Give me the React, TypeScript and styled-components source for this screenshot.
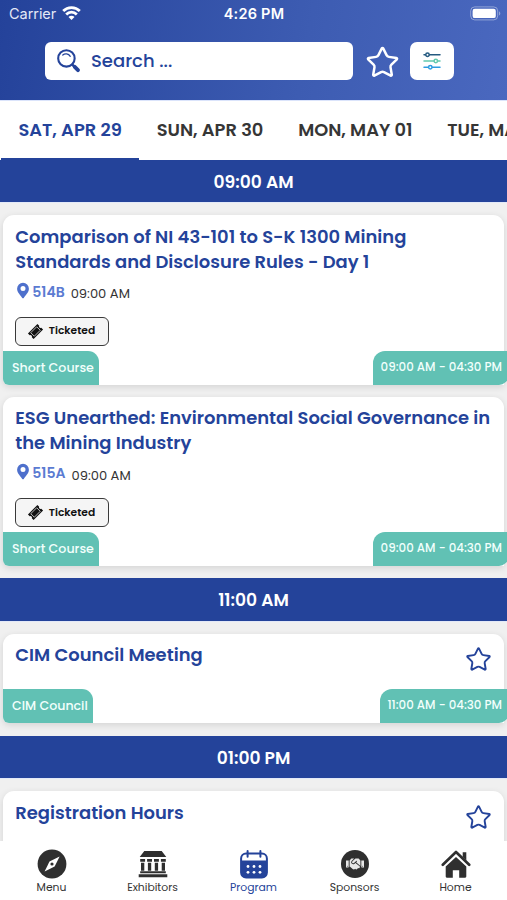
import React from 'react';
import styled, { createGlobalStyle } from 'styled-components';
import { Star } from 'lucide-react';
import { FaHandshake } from 'react-icons/fa';

const GlobalStyle = createGlobalStyle`
  *, *::before, *::after { box-sizing: border-box; }
  body {
    margin: 0;
    background: #f0f0f0;
    font-family: Poppins, Inter, 'Open Sans', sans-serif;
    color: #333333;
  }
`;

const blue = '#24439a';
const teal = '#61c1b4';
const dark = '#2f2f2f';

const Screen = styled.div`
  width: 507px;
  height: 900px;
  overflow: hidden;
  display: flex;
  flex-direction: column;
  background: #f0f0f0;
`;

const Header = styled.header`
  flex: none;
  height: 100px;
  background: linear-gradient(100deg, #24429a 0%, #3d5cb2 60%, #4a68bf 100%);
`;

const StatusBar = styled.div`
  height: 27px;
  padding: 0 8px 0 9px;
  display: grid;
  grid-template-columns: 1fr auto 1fr;
  align-items: center;
  color: #ffffff;
  font-family: Inter, sans-serif;
`;

const Carrier = styled.div`
  display: flex;
  align-items: center;
  gap: 6px;
  font-size: 14.5px;
  letter-spacing: -0.05px;
  color: #e4e9f6;
`;

const Clock = styled.div`
  font-size: 14.5px;
  font-weight: 600;
  letter-spacing: 0.25px;
`;

const BatterySlot = styled.div`
  display: flex;
  justify-content: flex-end;
  margin-right: -2px;
`;

const SearchRow = styled.div`
  display: flex;
  align-items: center;
  padding: 15px 0 0 45px;
`;

const SearchField = styled.div`
  width: 307.5px;
  height: 38px;
  display: flex;
  align-items: center;
  padding: 0 0 1px 11px;
  gap: 10px;
  border-radius: 6px;
  background: #ffffff;
  color: ${blue};
  font-size: 18px;
  font-weight: 500;
  line-height: 26px;
`;

const FavouriteButton = styled.div`
  width: 57.5px;
  padding: 2px 0 0 2px;
  display: flex;
  justify-content: center;
  color: #ffffff;
`;

const FilterButton = styled.div`
  width: 44px;
  height: 38px;
  display: flex;
  align-items: center;
  justify-content: center;
  border-radius: 7px;
  background: #ffffff;
`;

const Tabs = styled.nav`
  flex: none;
  height: 59.5px;
  padding-left: 1px;
  display: flex;
  overflow: hidden;
  background: #ffffff;
  border-top: 1px solid #dbe4fb;
`;

const Tab = styled.div<{ $active?: boolean }>`
  flex: none;
  padding: 0 17.4px;
  line-height: 57px;
  font-size: 17.85px;
  font-weight: 600;
  white-space: nowrap;
  color: ${(p) => (p.$active ? blue : '#363636')};
  border-bottom: 2.5px solid ${(p) => (p.$active ? blue : 'transparent')};
`;

const Program = styled.main`
  flex: 1;
  min-height: 0;
  overflow: hidden;
`;

const TimeBar = styled.h2`
  margin: 0;
  height: 43.6px;
  line-height: 44px;
  text-align: center;
  font-size: 17.1px;
  font-weight: 600;
  color: #ffffff;
  background: ${blue};
  border-bottom: 1px solid #e3e9f8;
`;

const Group = styled.section`
  padding: 12px 3px 12.3px 3px;
  display: flex;
  flex-direction: column;
  gap: 12px;
`;

const Card = styled.article<{ $tall?: boolean }>`
  height: ${(p) => (p.$tall ? 169.5 : 89.5)}px;
  display: flex;
  flex-direction: column;
  justify-content: space-between;
  background: #ffffff;
  border-radius: 11px 11px 0 6px;
  box-shadow: 0 2px 7px rgba(0, 0, 0, 0.12);
`;

const CardTop = styled.div`
  display: flex;
  justify-content: space-between;
  padding: 8.5px 12px 0 12.3px;
`;

const Title = styled.h3`
  margin: 0;
  font-size: 17.95px;
  font-weight: 600;
  line-height: 25px;
  color: ${blue};
`;

const TitleLine = styled.span`
  display: block;
  white-space: nowrap;
`;

const CardStar = styled.div`
  padding-top: 4px;
  color: ${blue};
`;

const Meta = styled.div`
  display: flex;
  align-items: center;
  height: 20px;
  margin-top: 8px;
`;

const Room = styled.span`
  margin: 0 6px 0 0;
  font-size: 14px;
  font-weight: 600;
  line-height: 20px;
  color: #5b7bd2;
`;

const StartTime = styled.span`
  padding-top: 5px;
  font-size: 13.1px;
  line-height: 20px;
  color: #333333;
`;

const Ticket = styled.div`
  width: 94px;
  height: 29px;
  margin: 15px 0 0 -0.5px;
  padding-left: 11px;
  display: flex;
  align-items: center;
  gap: 5px;
  border: 1.5px solid #3a3a3a;
  border-radius: 6px;
  background: #f5f5f5;
  color: #111111;
  font-size: 10.7px;
  font-weight: 600;
`;

const CardFooter = styled.footer`
  display: flex;
  justify-content: space-between;
  margin-right: -4px;
  color: #f2fffc;
  font-weight: 500;
`;

const TypeTag = styled.span`
  height: 34px;
  padding: 0 5.5px 0 9px;
  line-height: 34px;
  border-radius: 0 11px 0 6px;
  background: ${teal};
  font-size: 12.6px;
`;

const RangeTag = styled.span`
  height: 34px;
  padding: 0 6px 0 7.5px;
  line-height: 33.5px;
  border-radius: 12px 0 9px 0;
  background: ${teal};
  font-size: 11.85px;
  white-space: nowrap;
`;

const BottomNav = styled.nav`
  flex: none;
  height: 59px;
  display: grid;
  grid-template-columns: repeat(5, 101px);
  justify-content: center;
  background: #ffffff;
`;

const NavItem = styled.div<{ $active?: boolean }>`
  display: flex;
  flex-direction: column;
  align-items: center;
  padding-top: 8px;
  gap: 1px;
  font-size: 10.8px;
  line-height: 15px;
  color: ${(p) => (p.$active ? blue : '#333333')};

  svg { display: block; }
`;

const SponsorBadge = styled.span`
  width: 28px;
  height: 28px;
  margin: 1px 0;
  display: flex;
  align-items: center;
  justify-content: center;
  border-radius: 50%;
  background: ${dark};
  color: #e8e8e8;
`;

const WifiIcon = () => (
  <svg width="19" height="15" viewBox="0 0 19 15" fill="none" stroke="#fff" strokeWidth="2.8">
    <path d="M1.2 5.1a11.7 11.7 0 0 1 16.6 0" />
    <path d="M4.2 8.4a7.5 7.5 0 0 1 10.6 0" />
    <path d="M9.5 14 6.5 11a4.2 4.2 0 0 1 6 0z" fill="#fff" stroke="none" />
  </svg>
);

const BatteryIcon = () => (
  <svg width="31" height="15" viewBox="0 0 31 15">
    <rect x="0.7" y="0.9" width="27" height="13" rx="4" fill="none" stroke="#fff" strokeOpacity="0.4" />
    <rect x="2.6" y="2.7" width="23.2" height="9.4" rx="2.2" fill="#fff" />
    <path d="M29 5.2c1.8.8 1.8 3.6 0 4.4z" fill="#fff" fillOpacity="0.4" />
  </svg>
);

const SearchIcon = () => (
  <svg width="25" height="25" viewBox="0 0 24 24" fill="none" stroke={blue} strokeLinecap="round">
    <circle cx="10" cy="10" r="7.9" strokeWidth="2" />
    <path d="m15.7 16 1.8 1.8" strokeWidth="2.4" />
    <path d="m18 18.1 3.1 3.1" strokeWidth="3.7" />
    <path d="M6.5 6.800c2-1.800 5.500-1.500 7.200 1.200" strokeWidth="1.200" />
  </svg>
);

const FilterIcon = () => (
  <svg width="20" height="20" viewBox="0 0 20 20" strokeWidth="1.5" strokeLinecap="round">
    <g stroke="#255a80" fill="#fff"><path d="M2 3.7h16" /><circle cx="5.500" cy="3.700" r="1.700" /></g>
    <g stroke="#62c9ad" fill="#fff"><path d="M2 10h16" /><circle cx="13.800" cy="10" r="1.700" /></g>
    <g stroke="#2d9ce0" fill="#fff"><path d="M2 16.300h16" /><circle cx="8.300" cy="16.300" r="1.700" /></g>
  </svg>
);

const PinIcon = () => (
  <svg width="17" height="20" viewBox="0 0 17 20">
    <path
      fill="#4e70cc"
      fillRule="evenodd"
      d="M8 .8a5.900 5.900 0 0 0-5.900 5.900c0 3.900 3.800 6.600 5.100 9.200q.8.900 1.600 0c1.300-2.600 5.100-5.300 5.100-9.200A5.900 5.900 0 0 0 8 .8Zm0 3.200a2.500 2.500 0 1 1 0 5 2.500 2.500 0 0 1 0-5Z"
    />
  </svg>
);

const TicketIcon = () => (
  <svg width="17" height="17" viewBox="0 0 17 17">
    <g transform="rotate(-45 8.5 8.5)">
      <path d="M1.800 4.500h13.400v2.500a1.600 1.600 0 0 0 0 3v2.500H1.800V10a1.600 1.600 0 0 0 0-3z" fill="#111" />
      <rect x="4.300" y="6" width="8.400" height="5" fill="none" stroke="#f5f5f5" strokeWidth="0.700" />
    </g>
  </svg>
);

const CompassIcon = () => (
  <svg width="30" height="30" viewBox="0 0 30 30">
    <circle cx="15" cy="15" r="14.400" fill={dark} />
    <path d="M22.600 7.500 17.600 17.400 7.600 22.500 12.500 12.500z" fill="#fff" />
    <circle cx="15" cy="15" r="1.600" fill={dark} />
  </svg>
);

const HallIcon = () => (
  <svg width="30" height="30" viewBox="0 0 30 30" fill={dark}>
    <path d="M6.300 2h17.400l4.600 6H1.700zM.7 25.200h28.600v3H.7zM2.200 22.300h25.600v1.900H2.200z" />
    <path d="M2.200 10h4.900v2.800H2.200zM9.100 10h4.900v2.800H9.100zM16 10h4.900v2.800H16zM22.900 10h4.900v2.800h-4.900z" />
    <path d="M3 13.800h3.300v8H3zM9.900 13.800h3.300v8H9.900zM16.800 13.800h3.300v8h-3.300zM23.700 13.800H27v8h-3.300z" />
  </svg>
);

const CalendarIcon = () => (
  <svg width="30" height="30" viewBox="0 0 30 30">
    <rect x="2.100" y="4.600" width="25.800" height="24" rx="5" fill="#fff" stroke={blue} strokeWidth="2" />
    <path d="M2 11.400h26v12.500a5 5 0 0 1-5 5H7a5 5 0 0 1-5-5z" fill={blue} />
    <path d="M8.600 2v5.800M21.400 2v5.800" stroke={blue} strokeWidth="2" strokeLinecap="round" />
    <g fill="#fff">
      <circle cx="9" cy="17.500" r="1.400" /><circle cx="15" cy="17.500" r="1.400" /><circle cx="21" cy="17.500" r="1.400" />
      <circle cx="9" cy="23.300" r="1.400" /><circle cx="15" cy="23.300" r="1.400" /><circle cx="21" cy="23.300" r="1.400" />
    </g>
  </svg>
);

const HomeIcon = () => (
  <svg width="30" height="30" viewBox="0 0 30 30">
    <path d="m1.800 15.700 13.200-12.700 13.200 12.700" fill="none" stroke={dark} strokeWidth="2.700" strokeLinecap="round" strokeLinejoin="round" />
    <path d="M21.700 3.200h3.600v8.200l-3.600-3.500z" fill={dark} />
    <path d="M15 8 25.300 17.500v10.100q0 1.100-1.100 1.100h-6v-7.500h-6.400v7.500H5.800q-1.100 0-1.100-1.100V17.500z" fill={dark} />
  </svg>
);

type Session = {
  title: string[];
  room?: string;
  start?: string;
  type?: string;
  range?: string;
};

const groups: { time: string; sessions: Session[] }[] = [
  {
    time: '09:00 AM',
    sessions: [
      {
        title: ['Comparison of NI 43-101 to S-K 1300 Mining', 'Standards and Disclosure Rules - Day 1'],
        room: '514B',
        start: '09:00 AM',
        type: 'Short Course',
        range: '09:00 AM - 04:30 PM',
      },
      {
        title: ['ESG Unearthed: Environmental Social Governance in', 'the Mining Industry'],
        room: '515A',
        start: '09:00 AM',
        type: 'Short Course',
        range: '09:00 AM - 04:30 PM',
      },
    ],
  },
  {
    time: '11:00 AM',
    sessions: [
      { title: ['CIM Council Meeting'], type: 'CIM Council', range: '11:00 AM - 04:30 PM' },
    ],
  },
  {
    time: '01:00 PM',
    sessions: [{ title: ['Registration Hours'] }],
  },
];

const SessionCard = ({ session }: { session: Session }) => (
  <Card $tall={!!session.room}>
    <CardTop>
      <div>
        <Title>
          {session.title.map((line) => (
            <TitleLine key={line}>{line}</TitleLine>
          ))}
        </Title>
        {session.room && (
          <>
            <Meta>
              <PinIcon />
              <Room>{session.room}</Room>
              <StartTime>{session.start}</StartTime>
            </Meta>
            <Ticket><TicketIcon />Ticketed</Ticket>
          </>
        )}
      </div>
      {!session.room && <CardStar><Star size={27} strokeWidth={1.7} /></CardStar>}
    </CardTop>
    {session.type && (
      <CardFooter>
        <TypeTag>{session.type}</TypeTag>
        <RangeTag>{session.range}</RangeTag>
      </CardFooter>
    )}
  </Card>
);

export default function App() {
  return (
    <Screen>
      <GlobalStyle />
      <Header>
        <StatusBar>
          <Carrier>Carrier<WifiIcon /></Carrier>
          <Clock>4:26 PM</Clock>
          <BatterySlot><BatteryIcon /></BatterySlot>
        </StatusBar>
        <SearchRow>
          <SearchField><SearchIcon />Search ...</SearchField>
          <FavouriteButton><Star size={35} strokeWidth={1.7} /></FavouriteButton>
          <FilterButton><FilterIcon /></FilterButton>
        </SearchRow>
      </Header>
      <Tabs>
        <Tab $active>SAT, APR 29</Tab>
        <Tab>SUN, APR 30</Tab>
        <Tab>MON, MAY 01</Tab>
        <Tab>TUE, MAY 02</Tab>
      </Tabs>
      <Program>
        {groups.map((group) => (
          <React.Fragment key={group.time}>
            <TimeBar>{group.time}</TimeBar>
            <Group>
              {group.sessions.map((session) => (
                <SessionCard key={session.title[0]} session={session} />
              ))}
            </Group>
          </React.Fragment>
        ))}
      </Program>
      <BottomNav>
        <NavItem><CompassIcon />Menu</NavItem>
        <NavItem><HallIcon />Exhibitors</NavItem>
        <NavItem $active><CalendarIcon />Program</NavItem>
        <NavItem><SponsorBadge><FaHandshake size={18} /></SponsorBadge>Sponsors</NavItem>
        <NavItem><HomeIcon />Home</NavItem>
      </BottomNav>
    </Screen>
  );
}
